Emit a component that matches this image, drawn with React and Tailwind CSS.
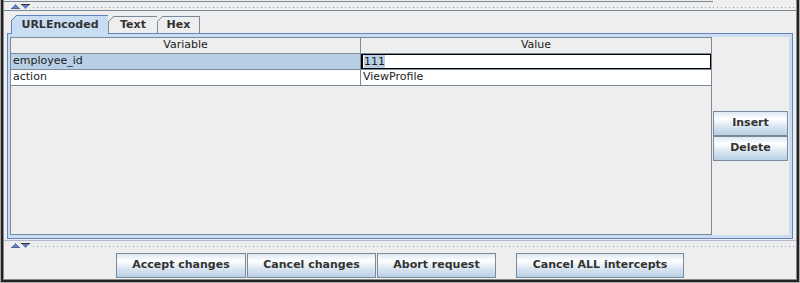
import React from "react";

const FONT = "font-['DejaVu_Sans',sans-serif]";
const BTN =
  "flex items-center justify-center h-[25px] border border-[#7a8a99] bg-[linear-gradient(to_bottom,#dde8f3_0%,#ffffff_30%,#dde8f3_60%,#b8cfe5_100%)] text-[11px] font-bold text-[#333333] whitespace-nowrap";

const ROWS = [
  { name: "employee_id", value: "111", editing: true },
  { name: "action", value: "ViewProfile" },
];

function Divider({ className }) {
  return (
    <div className={`flex items-start pl-[7px] ${className}`}>
      <svg width="9" height="5" viewBox="0 0 9 5" shapeRendering="crispEdges" className="shrink-0">
        <path d="M4 0h1v1h-1z M3 1h3v1h-3z M2 2h5v1h-5z M1 3h7v1h-7z" fill="#6382bf" />
        <path d="M0 4h9v1h-9z" fill="#4a6596" />
      </svg>
      <svg width="9" height="5" viewBox="0 0 9 5" shapeRendering="crispEdges" className="shrink-0 ml-px">
        <path d="M0 0h9v1h-9z" fill="#333333" />
        <path d="M1 1h7v1h-7z M2 2h5v1h-5z M3 3h3v1h-3z M4 4h1v1h-1z" fill="#6382bf" />
      </svg>
      <div className="flex-1 h-px mt-[3px] ml-[3px] bg-[repeating-linear-gradient(90deg,#8d9cad_0px,#8d9cad_1px,transparent_1px,transparent_4px)]" />
    </div>
  );
}

function Tab({ label, selected, last, width }) {
  return (
    <div
      className={`relative flex items-center justify-center border-t border-l ${last ? "border-r" : ""} ${width} ${
        selected
          ? "h-[19px] -mb-px z-10 bg-[#c8ddf2] border-[#6382bf]"
          : "h-[17px] bg-[#eeeeee] border-[#7a8a99]"
      } text-[11px] font-bold text-[#333333]`}
    >
      <svg className="absolute -left-px -top-px" width="6" height="6" viewBox="0 0 6 6">
        <path d="M0 0H5.5L0 5.5Z" fill="#eeeeee" />
        <path d="M0.5 5.5L5.5 0.5" stroke={selected ? "#6382bf" : "#7a8a99"} strokeWidth="1" />
      </svg>
      {label}
    </div>
  );
}

export default function App() {
  return (
    <div className={`w-[800px] h-[283px] bg-[#a8a8a8] pl-px pr-px pb-px ${FONT}`}>
      <div className="h-full border-l-2 border-r-2 border-b-2 border-[#222222]">
        <div className="h-full border-l border-r border-b border-[#8a8a8a] bg-[#eeeeee] flex flex-col">
          {/* top strip */}
          <div className="h-[3px] pt-px shrink-0">
            <div className="h-px w-[709px] bg-[#7a8a99]" />
          </div>

          {/* top divider */}
          <Divider className="h-[8px] pt-px border-b border-[#7a8a99] shrink-0" />

          {/* tabs */}
          <div className="mt-[4px] mx-[3px] flex flex-col">
            <div className="flex items-end h-[18px] pl-[4px]">
              <Tab label="URLEncoded" selected width="w-[97px]" />
              <Tab label="Text" width="w-[49px]" />
              <Tab label="Hex" last width="w-[43px]" />
            </div>

            <div className="h-[206px] border border-[#6382bf] bg-[#c8ddf2] pt-[3px] px-[2px] pb-[3px] flex">
              {/* table */}
              <div className="w-[702px] flex flex-col border border-[#7a8a99] bg-[#eeeeee] text-[11px] text-[#222222]">
                <div className="flex h-[16px] border-b border-[#7a8a99] bg-[#eeeeee]">
                  <div className="w-[350px] border-r border-[#7a8a99] flex items-center justify-center">Variable</div>
                  <div className="flex-1 flex items-center justify-center">Value</div>
                </div>
                {ROWS.map((r) => (
                  <div key={r.name} className="flex h-[16px] border-b border-[#7a8a99]">
                    <div
                      className={`w-[350px] border-r border-[#7a8a99] flex items-center pl-[2px] ${
                        r.editing ? "bg-[#b8cfe5]" : "bg-white"
                      }`}
                    >
                      {r.name}
                    </div>
                    {r.editing ? (
                      <div className="flex-1 flex items-center bg-white border border-l-2 border-black pl-px">
                        <span className="bg-[#b8cfe5] leading-[13px]">{r.value}</span>
                      </div>
                    ) : (
                      <div className="flex-1 flex items-center bg-white pl-[2px]">{r.value}</div>
                    )}
                  </div>
                ))}
              </div>

              {/* side buttons */}
              <div className="w-[77px] bg-[#eeeeee] flex flex-col justify-center items-center">
                <button className={`${BTN} w-[75px]`}>Insert</button>
                <button className={`${BTN} w-[75px]`}>Delete</button>
              </div>
            </div>
          </div>

          {/* bottom divider */}
          <div className="h-[11px] shrink-0 flex flex-col">
            <div className="h-px" />
            <div className="h-px bg-[#b0bccb]" />
            <Divider className="flex-1 pt-[2px]" />
          </div>

          {/* button bar */}
          <div className="flex-1 flex justify-center items-start pt-[3px]">
            <button className={`${BTN} w-[130px]`}>Accept changes</button>
            <button className={`${BTN} w-[129px] ml-px`}>Cancel changes</button>
            <button className={`${BTN} w-[119px] ml-px`}>Abort request</button>
            <button className={`${BTN} w-[168px] ml-[20px]`}>Cancel ALL intercepts</button>
          </div>
        </div>
      </div>
    </div>
  );
}
